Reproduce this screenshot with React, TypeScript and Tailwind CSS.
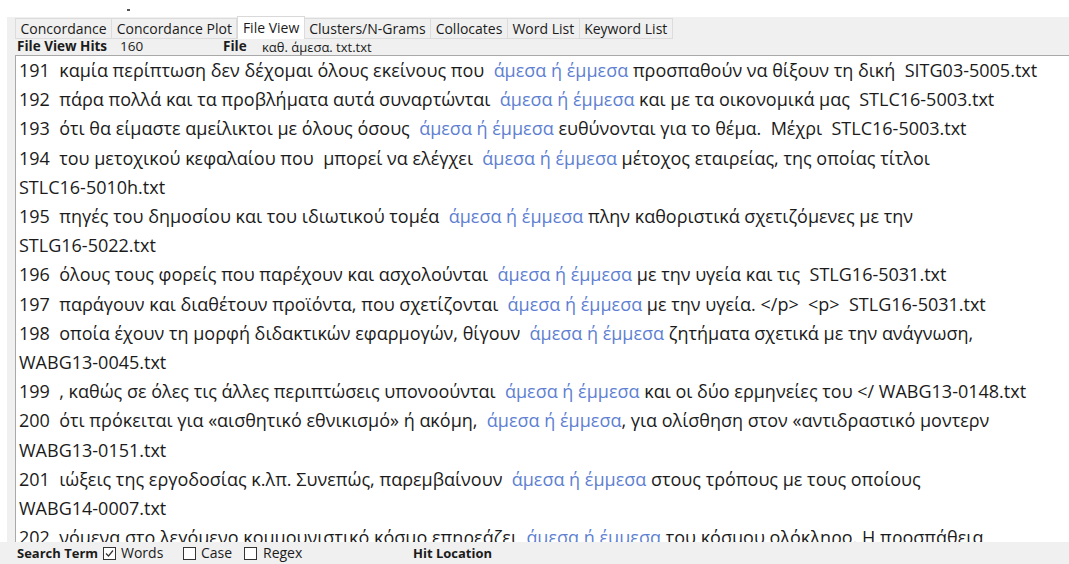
import React from "react";

type Seg = { t: string; hit?: boolean };

// each entry is one visual line of the file view
const lines: Seg[][] = [
  [{ t: "191  καμία περίπτωση δεν δέχομαι όλους εκείνους που  " }, { t: "άμεσα ή έμμεσα", hit: true }, { t: " προσπαθούν να θίξουν τη δική  SITG03-5005.txt" }],
  [{ t: "192  πάρα πολλά και τα προβλήματα αυτά συναρτώνται  " }, { t: "άμεσα ή έμμεσα", hit: true }, { t: " και με τα οικονομικά μας  STLC16-5003.txt" }],
  [{ t: "193  ότι θα είμαστε αμείλικτοι με όλους όσους  " }, { t: "άμεσα ή έμμεσα", hit: true }, { t: " ευθύνονται για το θέμα.  Μέχρι  STLC16-5003.txt" }],
  [{ t: "194  του μετοχικού κεφαλαίου που  μπορεί να ελέγχει  " }, { t: "άμεσα ή έμμεσα", hit: true }, { t: " μέτοχος εταιρείας, της οποίας τίτλοι" }],
  [{ t: "STLC16-5010h.txt" }],
  [{ t: "195  πηγές του δημοσίου και του ιδιωτικού τομέα  " }, { t: "άμεσα ή έμμεσα", hit: true }, { t: " πλην καθοριστικά σχετιζόμενες με την" }],
  [{ t: "STLG16-5022.txt" }],
  [{ t: "196  όλους τους φορείς που παρέχουν και ασχολούνται  " }, { t: "άμεσα ή έμμεσα", hit: true }, { t: " με την υγεία και τις  STLG16-5031.txt" }],
  [{ t: "197  παράγουν και διαθέτουν προϊόντα, που σχετίζονται  " }, { t: "άμεσα ή έμμεσα", hit: true }, { t: " με την υγεία. </p>  <p>  STLG16-5031.txt" }],
  [{ t: "198  οποία έχουν τη μορφή διδακτικών εφαρμογών, θίγουν  " }, { t: "άμεσα ή έμμεσα", hit: true }, { t: " ζητήματα σχετικά με την ανάγνωση," }],
  [{ t: "WABG13-0045.txt" }],
  [{ t: "199  , καθώς σε όλες τις άλλες περιπτώσεις υπονοούνται  " }, { t: "άμεσα ή έμμεσα", hit: true }, { t: " και οι δύο ερμηνείες του </ WABG13-0148.txt" }],
  [{ t: "200  ότι πρόκειται για «αισθητικό εθνικισμό» ή ακόμη,  " }, { t: "άμεσα ή έμμεσα", hit: true }, { t: ", για ολίσθηση στον «αντιδραστικό μοντερν" }],
  [{ t: "WABG13-0151.txt" }],
  [{ t: "201  ιώξεις της εργοδοσίας κ.λπ. Συνεπώς, παρεμβαίνουν  " }, { t: "άμεσα ή έμμεσα", hit: true }, { t: " στους τρόπους με τους οποίους" }],
  [{ t: "WABG14-0007.txt" }],
  [{ t: "202  νόμενα στο λεγόμενο κομμουνιστικό κόσμο επηρεάζει  " }, { t: "άμεσα ή έμμεσα", hit: true }, { t: " του κόσμου ολόκληρο. Η προσπάθεια" }],
];

const tabs = ["Concordance", "Concordance Plot", "File View", "Clusters/N-Grams", "Collocates", "Word List", "Keyword List"];

function Check({ on }: { on?: boolean }) {
  return (
    <span className="inline-flex self-center shrink-0 w-[13px] h-[13px] border border-[#333] bg-white items-center justify-center">
      {on && (
        <svg width="11" height="11" viewBox="0 0 11 11">
          <path d="M2 5.5 L4.5 8 L9 2.5" fill="none" stroke="#333" strokeWidth="1.2" />
        </svg>
      )}
    </span>
  );
}

export default function App() {
  return (
    <div className="w-[1069px] h-[564px] bg-white overflow-hidden flex flex-col text-[#1b1b1b]" style={{ fontFamily: "'Open Sans', 'Noto Sans', sans-serif" }}>
      {/* window top strip */}
      <div className="h-[17px] shrink-0 relative">
        <span className="absolute left-[127px] top-[9px] w-[3px] h-[2px] bg-[#555]" />
      </div>

      <div className="flex-1 flex flex-col bg-[#f0f0f0] ml-[7px] min-h-0">
        {/* tool tabs */}
        <div className="h-[22px] shrink-0 flex items-end pl-[9px]">
          {tabs.map((t) =>
            t === "File View" ? (
              <div key={t} className="h-[23px] -mt-px px-[4.5px] bg-white border border-b-0 border-[#d9d9d9] text-[14px] leading-[21px]">
                {t}
              </div>
            ) : (
              <div key={t} className="h-[21px] px-[4.5px] bg-[#f0f0f0] border border-[#dcdcdc] -ml-px text-[14px] leading-[19px]">
                {t}
              </div>
            )
          )}
        </div>

        {/* hits / file info */}
        <div className="h-[16px] shrink-0 flex items-center text-[13.5px] pl-[10px] leading-none">
          <span className="font-bold w-[103px]">File View Hits</span>
          <span className="w-[103px]">160</span>
          <span className="font-bold w-[39px]">File</span>
          <span className="text-[13px]">καθ. άμεσα. txt.txt</span>
        </div>

        {/* file view text */}
        <div className="flex-1 min-h-0 ml-[8px] bg-white border-l border-t border-[#a9a9a9] overflow-hidden pl-[3px] text-[18px] leading-[29.2px]">
          {lines.map((segs, i) => (
            <div key={i} className="whitespace-pre">
              {segs.map((s, j) => (
                <span key={j} className={s.hit ? "text-[#5e7fd1]" : ""}>
                  {s.t}
                </span>
              ))}
            </div>
          ))}
        </div>

        {/* search options */}
        <div className="h-[22px] shrink-0 flex items-baseline leading-[22px] text-[14px] -ml-[7px] pl-[17px] bg-[#f0f0f0]">
          <span className="font-bold text-[13px] w-[86px]">Search Term</span>
          <Check on />
          <span className="ml-[5px] w-[62px]">Words</span>
          <Check />
          <span className="ml-[5px] w-[43px]">Case</span>
          <Check />
          <span className="ml-[6px] w-[150px]">Regex</span>
          <span className="font-bold text-[13px]">Hit Location</span>
        </div>
      </div>
    </div>
  );
}
